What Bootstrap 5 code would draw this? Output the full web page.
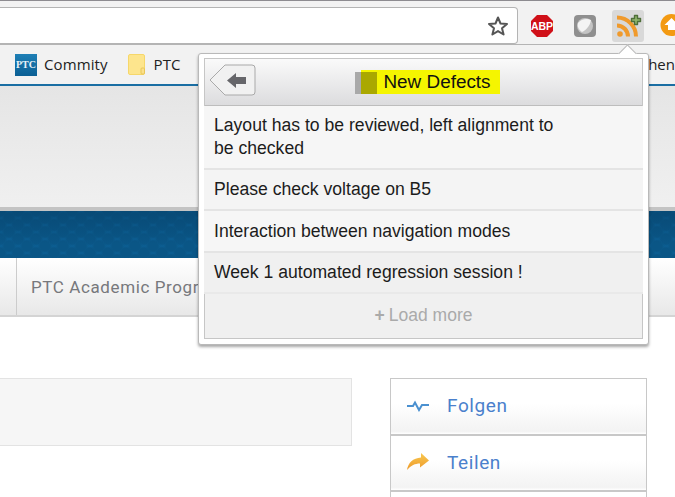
<!DOCTYPE html>
<html lang="de">
<head>
<meta charset="utf-8">
<title>New Defects</title>
<link href="https://cdn.jsdelivr.net/npm/bootstrap@5.3.0/dist/css/bootstrap.min.css" rel="stylesheet">
<style>
html,body{height:100%;overflow:hidden}
body{background:#fff;width:675px;height:497px;position:relative;font-family:"Liberation Sans",sans-serif}
.top-strip{height:1px;background:#8d8b90}
.tool-row{height:43px;background:#f2f2f2;padding-top:6px}
.omni{width:518px;height:37px;background:#fff;border:1px solid #b4b4b4;border-left:0;border-radius:0 4px 4px 0;padding-right:8px}
.ext-ico{width:32px;height:32px;flex-shrink:0}
.ext-wrap{gap:11px;margin-left:8px;margin-top:3px}
.ext-active{background:#d9d9d9;border-radius:3px}
.mark-row{height:40px;background:#f2f2f2;border-top:1px solid #b4b4b4;padding-left:15px;font:15px/1 "Open Sans",sans-serif;color:#222;position:relative}
.mark-row span{margin-left:7px;letter-spacing:.1px}
.ptc-logo{width:22px;height:22px;background:linear-gradient(#1e7fb5,#0b5f94);color:#e8f2f8;font:bold 10px/22px "Liberation Serif",serif;text-align:center}
.folder-ico{margin-left:20px}
.mark-row .folder-lbl{margin-left:9px}
.mark-row .cut-lbl{margin-left:auto;color:#222;letter-spacing:0}
.blue-line{height:2px;background:#1a6ea3}
.site-head{height:121px;background:linear-gradient(#e5e5e5,#f0f0f0)}
.head-edge{height:4px;background:#c4c4c4}
.band{height:47px;background-color:#0d659c;background-image:linear-gradient(rgba(0,30,60,.22),rgba(0,30,60,0) 70%),radial-gradient(circle at 9px 7px,#0a5686 5px,transparent 8px),radial-gradient(circle at 0 0,#0a5686 5px,transparent 8px),radial-gradient(circle at 18px 0,#0a5686 5px,transparent 8px),radial-gradient(circle at 0 14px,#0a5686 5px,transparent 8px),radial-gradient(circle at 18px 14px,#0a5686 5px,transparent 8px);background-size:100% 100%,18px 14px,18px 14px,18px 14px,18px 14px,18px 14px}
.site-nav{height:59px;background:linear-gradient(#fff,#e8e8e8);border-bottom:2px solid #d4d4d4;font:17px "Roboto",sans-serif;color:#77787c;letter-spacing:.6px}
.nav-first{width:17px;border-right:1px solid #ccc}
.nav-cell{padding-left:14px;white-space:nowrap}
.page-body{padding-top:61px;gap:38px}
.well-box{width:352px;height:68px;background:#f6f6f6;border:1px solid #e3e3e3;border-left:0}
.act-list{width:257px;border:1px solid #c8c8c8;border-bottom:0;font:19px "Roboto",sans-serif;color:#4a80cc;letter-spacing:.6px}
.act-item{height:57px;padding:0 0 2px 16px;gap:18px;background:linear-gradient(#fff 45%,#f3f3f3 95%,#fff);border-bottom:2px solid #c8c8c8}
.act-item.short{height:56px}
.act-item.tail{height:6px;padding:0;border-bottom:0;background:#fff}
.popup{position:absolute;left:198px;top:53px;width:451px;height:292px;background:#fff;border:1px solid #b9b9b9;border-radius:3px;box-shadow:0 2px 3px rgba(0,0,0,.35);padding:4px 5px 5px}
.pop-tip{position:absolute;left:422px;top:-7px;width:13px;height:13px;background:#fff;border-left:1px solid #b9b9b9;border-top:1px solid #b9b9b9;transform:rotate(45deg)}
.pop-inner{height:100%;border:1px solid #c6c6c6;background:#f0f0f0;position:relative}
.pop-head{height:47px;background:linear-gradient(#fafafa,#dcdcde);border-bottom:1px solid #bdbdbd;position:relative}
.back-btn{position:absolute;left:4px;top:5px}
.pop-title{font-size:18.9px;line-height:24px;color:#111;background:#f5f500;padding:0 9px 0 22px;position:relative;margin-left:14px;margin-top:-1px}
.pop-title i{position:absolute;left:-6px;top:2px;width:22px;height:22px;background:#aaa800;border-left:6px solid #a9a9a9}
.pop-row{font-size:17.6px;line-height:23px;color:#1c1c1c;padding:0 10px;margin:0 -1px;border-bottom:2px solid #e4e4e4;display:flex;align-items:center}
.r1{height:64px;background:#f6f6f6}
.r2{height:41px;background:#f4f4f4}
.r3{height:42px;background:#f6f6f6}
.r4{height:41px;background:#f0f0f0;border-bottom:2px solid #e9e9e9}
.load-more{font-size:17.5px;color:#aaa;height:42px;gap:4px}
.first-txt{width:350px}
</style>
</head>
<body>
<div class="top-strip"></div>
<div class="tool-row d-flex align-items-start">
  <div class="omni d-flex align-items-center justify-content-end flex-shrink-0">
    <svg width="22" height="22" viewBox="0 0 22 22"><path d="M11 2.500l2.500 6 6.500.5-5 4.200 1.600 6.300L11 16.100 5.400 19.500 7 13.200 2 9l6.500-.5z" fill="none" stroke="#555" stroke-width="2" stroke-linejoin="round"/></svg>
  </div>
  <div class="ext-wrap d-flex align-items-center">
    <svg class="ext-ico" viewBox="0 0 32 32"><polygon points="11,5 21,5 27,11 27,21 21,27 11,27 5,21 5,11" fill="#d01018"/><text x="16" y="20" text-anchor="middle" font-family="Liberation Sans" font-weight="700" font-size="10.500" fill="#fff">ABP</text></svg>
    <svg class="ext-ico" viewBox="0 0 32 32"><rect x="5" y="5" width="22" height="22" rx="4" fill="#8f8f8f"/><circle cx="16" cy="16" r="8" fill="#c4c4c4"/><path d="M9 13c3-4 9-5 13-3-1 6-5 10-9 12-3-2-5-5-4-9z" fill="#f4f4f4"/></svg>
    <svg class="ext-ico ext-active" viewBox="0 0 32 32"><circle cx="8" cy="24" r="2.800" fill="#f09a2c"/><path d="M5 15.500a11 11 0 0 1 11 11M5 7.500a19 19 0 0 1 19 19" fill="none" stroke="#f09a2c" stroke-width="4"/><path d="M19.500 8.500h3v-3h3v3h3v3h-3v3h-3v-3h-3z" fill="#8fb56a" stroke="#4f6f3a" stroke-width="1.400" stroke-linejoin="round"/></svg>
    <svg class="ext-ico" viewBox="0 0 32 32"><circle cx="16.500" cy="15" r="11" fill="#f39a12"/><path d="M16.500 8l7 7h-3.500v5h-7v-5H9.500z" fill="#fff"/></svg>
  </div>
</div>
<div class="mark-row d-flex align-items-center">
  <div class="ptc-logo">PTC</div><span>Commity</span>
  <svg class="folder-ico" width="17" height="21" viewBox="0 0 17 21"><path d="M2 .5h13a1.500 1.500 0 0 1 1.500 1.500v17a1.500 1.500 0 0 1-1.500 1.500H2A1.500 1.500 0 0 1 .5 19V2A1.500 1.500 0 0 1 2 .5z" fill="#fde58d" stroke="#f6d76a"/><rect x="13" y="14" width="3.500" height="6" rx="1" fill="#fbe08a" stroke="#e8c658"/></svg>
  <span class="folder-lbl">PTC</span>
  <span class="cut-lbl">hen</span>
</div>
<div class="blue-line"></div>
<div class="site-head"></div>
<div class="head-edge"></div>
<div class="band"></div>
<div class="site-nav d-flex align-items-stretch">
  <div class="nav-first"></div>
  <div class="nav-cell d-flex align-items-center">PTC Academic Program</div>
</div>
<div class="page-body d-flex align-items-start">
  <div class="well-box flex-shrink-0"></div>
  <div class="act-list flex-shrink-0">
    <div class="act-item d-flex align-items-center">
      <svg width="22" height="12" viewBox="0 0 22 12"><path d="M0 6h6l2-3.500 4 7.500 3-5h7" fill="none" stroke="#4a90d0" stroke-width="2"/></svg><span>Folgen</span>
    </div>
    <div class="act-item short d-flex align-items-center">
      <svg width="22" height="18" viewBox="0 0 22 18"><defs><linearGradient id="shareFill" x1="0" y1="0" x2="0" y2="1"><stop offset="0" stop-color="#f8c850"/><stop offset="1" stop-color="#ee9a2a"/></linearGradient></defs><path d="M14 0l8 7.500-9 7V10.500C8 10.500 4 12.500 0 17 1 10 6 5 14 4.500z" fill="url(#shareFill)"/></svg><span>Teilen</span>
    </div>
    <div class="act-item tail"></div>
  </div>
</div>
<div class="popup">
  <div class="pop-tip"></div>
  <div class="pop-inner">
    <div class="pop-head d-flex align-items-center justify-content-center">
      <svg class="back-btn" width="47" height="32" viewBox="0 0 47 32"><path d="M16 1h27a3 3 0 0 1 3 3v24a3 3 0 0 1-3 3H16L1 16z" fill="#f1f1f1" stroke="#a9a9a9"/><path d="M18 16.500L27 9v4h10v7H27v4z" fill="#66666a"/></svg>
      <div class="pop-title"><i></i>New Defects</div>
    </div>
    <div class="pop-row r1"><div class="first-txt">Layout has to be reviewed, left alignment to be checked</div></div>
    <div class="pop-row r2">Please check voltage on B5</div>
    <div class="pop-row r3">Interaction between navigation modes</div>
    <div class="pop-row r4">Week 1 automated regression session !</div>
    <div class="load-more d-flex align-items-center justify-content-center"><b>+</b> Load more</div>
  </div>
</div>
<script src="https://cdn.jsdelivr.net/npm/bootstrap@5.3.0/dist/js/bootstrap.bundle.min.js"></script>
</body>
</html>
